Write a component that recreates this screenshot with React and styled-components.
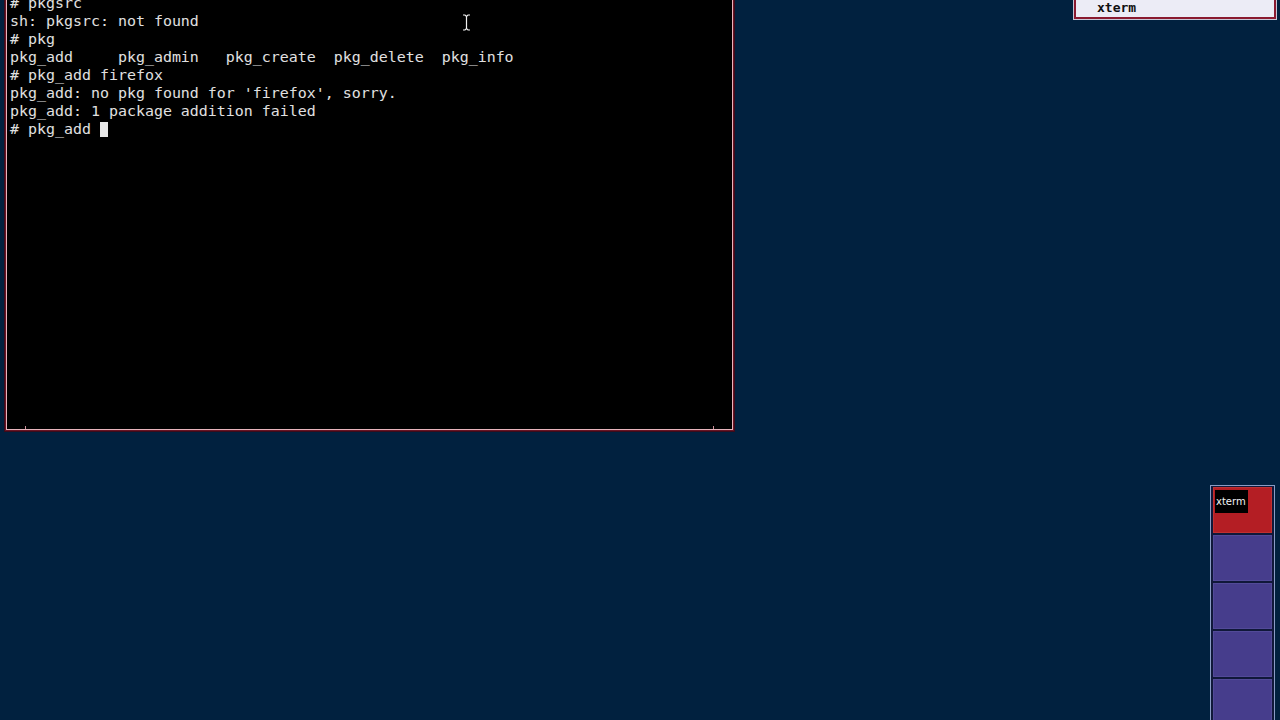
import React from 'react';
import styled, { createGlobalStyle } from 'styled-components';

const lines = [
  '# pkgsrc',
  'sh: pkgsrc: not found',
  '# pkg',
  'pkg_add     pkg_admin   pkg_create  pkg_delete  pkg_info',
  '# pkg_add firefox',
  "pkg_add: no pkg found for 'firefox', sorry.",
  'pkg_add: 1 package addition failed',
];

function App() {
  return (
    <Desktop>
      <GlobalStyle />
      <TermWindow>
        <TermText>
          {lines.map((l, i) => (
            <Line key={i}>{l}</Line>
          ))}
          <Line>
            {'# pkg_add '}
            <Cursor />
          </Line>
        </TermText>
        <Tick side="left" />
        <Tick side="right" />
      </TermWindow>

      <IBeam width="9" height="17" viewBox="0 0 9 17">
        <path d="M1 1 H3 L4.5 2.5 L6 1 H8 M4.5 2.5 V14.5 M1 16 H3 L4.5 14.5 L6 16 H8" stroke="#f0f0f0" strokeWidth="1.2" fill="none" />
      </IBeam>

      <IconBox>
        <IconLabel>xterm</IconLabel>
      </IconBox>

      <Pager>
        <Desk active>
          <DeskLabel>xterm</DeskLabel>
        </Desk>
        <Desk />
        <Desk />
        <Desk />
        <Desk />
      </Pager>
    </Desktop>
  );
}

export default App;

const GlobalStyle = createGlobalStyle`
  html, body {
    margin: 0;
    padding: 0;
    background: #01213f;
    overflow: hidden;
  }
`;

const Desktop = styled.div`
  position: relative;
  width: 1280px;
  height: 720px;
  background: #01213f;
  overflow: hidden;
`;

const TermWindow = styled.div`
  position: absolute;
  left: 5px;
  top: -12px;
  width: 729px;
  height: 443px;
  background: #000;
  border: 1px solid #6a1424;
  box-shadow: inset 0 0 0 1px #e6b4bc, 0 0 0 1px #3a0c1c;
  padding: 5px 0 0 4px;
  box-sizing: border-box;
`;

const TermText = styled.div`
  font-family: 'DejaVu Sans Mono', 'Liberation Mono', monospace;
  font-size: 14.95px;
  line-height: 18px;
  color: #e0e0e0;
  white-space: pre;
`;

const Line = styled.div`
  height: 18px;
  display: flex;
  align-items: center;
`;

const Cursor = styled.span`
  display: inline-block;
  width: 8px;
  height: 15px;
  margin-top: 1px;
  background: #e8e8e8;
`;

const Tick = styled.div`
  position: absolute;
  bottom: 1px;
  ${(p) => (p.side === 'left' ? 'left: 19px;' : 'right: 19px;')}
  width: 1px;
  height: 3px;
  background: #c89098;
`;

const IBeam = styled.svg`
  position: absolute;
  left: 462px;
  top: 14px;
`;

const IconBox = styled.div`
  position: absolute;
  left: 1074px;
  top: -4px;
  width: 202px;
  height: 23px;
  box-sizing: border-box;
  background: #ececf6;
  border: 2px solid #8a1a30;
  box-shadow: 0 0 0 1px #c8c8d8;
  padding: 0 0 0 21px;
`;

const IconLabel = styled.span`
  font-family: 'DejaVu Sans Mono', monospace;
  font-weight: bold;
  font-size: 13px;
  line-height: 17px;
  color: #101010;
`;

const Pager = styled.div`
  position: absolute;
  left: 1210px;
  top: 485px;
  width: 65px;
  height: 240px;
  box-sizing: border-box;
  border: 1px solid #8a9cc4;
  background: #10183a;
  padding: 1px 2px;
  display: flex;
  flex-direction: column;
  gap: 2px;
`;

const Desk = styled.div`
  position: relative;
  height: 46px;
  flex: none;
  background: ${(p) => (p.active ? '#b41e24' : '#463d8c')};
  border: 1px solid ${(p) => (p.active ? '#c03030' : '#524a98')};
  box-sizing: border-box;
`;

const DeskLabel = styled.div`
  position: absolute;
  left: 1px;
  top: 2px;
  width: 33px;
  height: 23px;
  background: #000;
  color: #f4f4f4;
  font-family: 'DejaVu Sans', sans-serif;
  font-size: 10px;
  line-height: 23px;
  padding-left: 1px;
  box-sizing: border-box;
`;
